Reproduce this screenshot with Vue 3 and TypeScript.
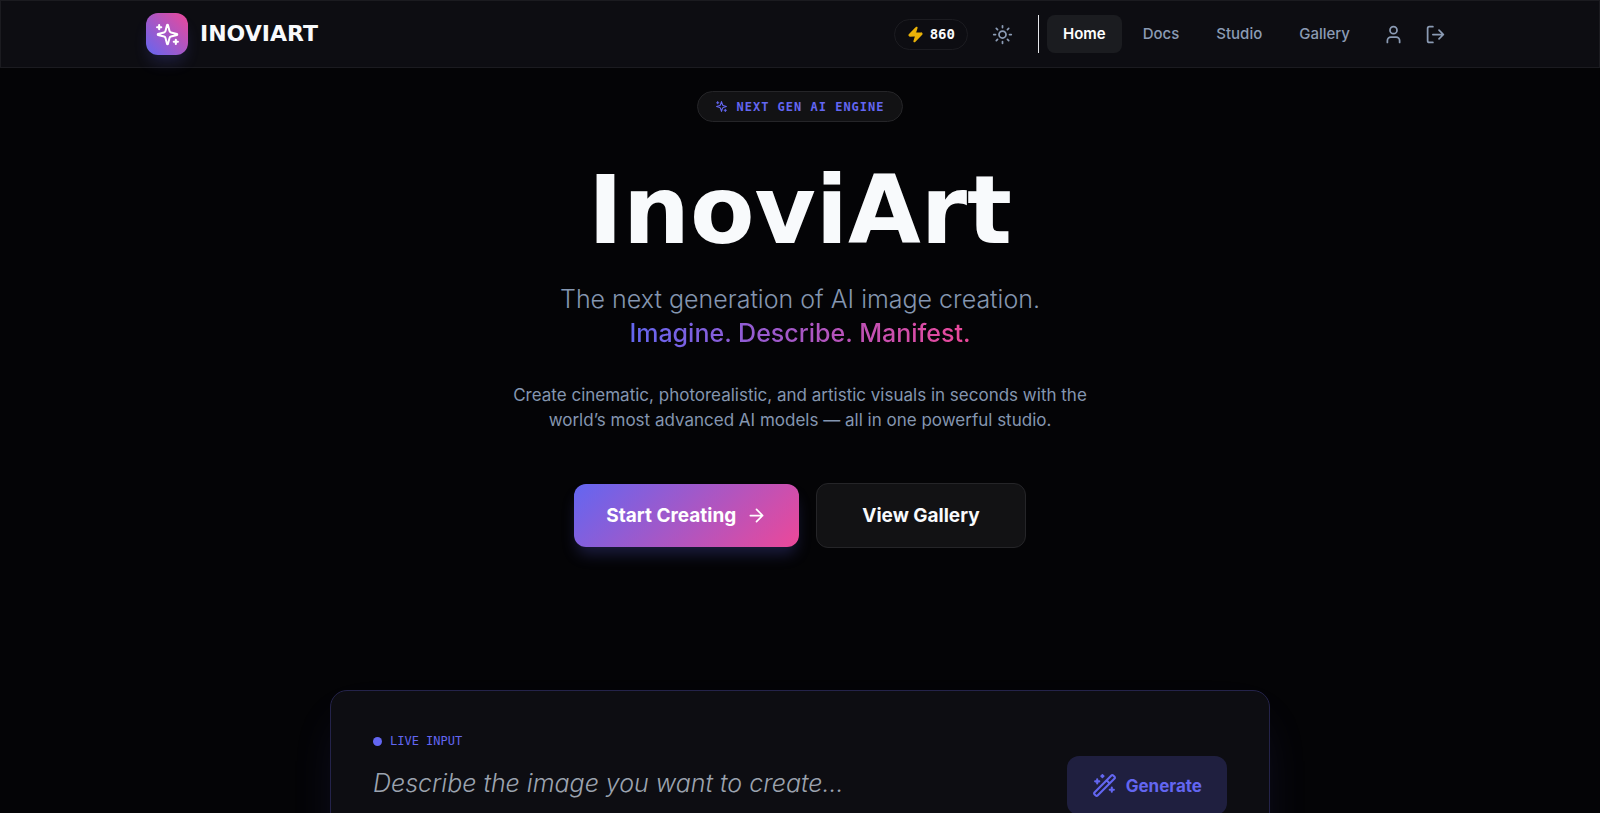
<script setup lang="ts">
import { ref } from 'vue'

interface NavLink {
  label: string
  href: string
  active?: boolean
}

const credits = ref(860)
const prompt = ref('')
const links: NavLink[] = [
  { label: 'Home', href: '#home', active: true },
  { label: 'Docs', href: '#docs' },
  { label: 'Studio', href: '#studio' },
  { label: 'Gallery', href: '#gallery' },
]
</script>

<template>
  <div class="page">
    <header class="topbar">
      <div class="bar">
        <a class="brand" href="#home">
          <span class="brand-mark">
            <svg class="icon" width="25" height="25" viewBox="0 0 24 24" aria-hidden="true">
              <path d="M9.937 15.5A2 2 0 0 0 8.5 14.063l-6.135-1.582a.5.5 0 0 1 0-.962L8.5 9.936A2 2 0 0 0 9.937 8.5l1.582-6.135a.5.5 0 0 1 .963 0L14.063 8.5A2 2 0 0 0 15.5 9.937l6.135 1.581a.5.5 0 0 1 0 .964L15.5 14.063a2 2 0 0 0-1.437 1.437l-1.582 6.135a.5.5 0 0 1-.963 0z" transform="translate(12 12) scale(.94) translate(-12 -12)" />
              <path d="M4 3v4M2 5h4M20 17v4M18 19h4" />
            </svg>
          </span>
          <span class="brand-name">INOVIART</span>
        </a>

        <div class="actions">
          <span class="credits">
            <svg width="17" height="17" viewBox="0 0 24 24" aria-hidden="true">
              <path class="bolt" d="M4 14a1 1 0 0 1-.78-1.63l9.9-10.2a.5.5 0 0 1 .86.46l-1.92 6.02A1 1 0 0 0 13 10h7a1 1 0 0 1 .78 1.63l-9.9 10.2a.5.5 0 0 1-.86-.46l1.92-6.02A1 1 0 0 0 11 14z" />
            </svg>
            {{ credits }}
          </span>
          <button class="icon-button" type="button" aria-label="Switch theme">
            <svg class="icon" width="21" height="21" viewBox="0 0 24 24" aria-hidden="true">
              <circle cx="12" cy="12" r="4" />
              <path d="M12 2v2M12 20v2M4.93 4.93l1.41 1.41M17.66 17.66l1.41 1.41M2 12h2M20 12h2M6.34 17.66l-1.41 1.41M19.07 4.93l-1.41 1.41" />
            </svg>
          </button>
          <nav class="nav">
            <a
              v-for="link in links"
              :key="link.label"
              class="nav-link"
              :class="{ active: link.active }"
              :href="link.href"
            >{{ link.label }}</a>
          </nav>
          <div class="account">
            <button class="icon-button" type="button" aria-label="Profile">
              <svg class="icon" width="21" height="21" viewBox="0 0 24 24" aria-hidden="true">
                <path d="M19 21v-2a4 4 0 0 0-4-4H9a4 4 0 0 0-4 4v2" />
                <circle cx="12" cy="7" r="4" />
              </svg>
            </button>
            <button class="icon-button" type="button" aria-label="Log out">
              <svg class="icon" width="21" height="21" viewBox="0 0 24 24" aria-hidden="true">
                <path d="M9 21H5a2 2 0 0 1-2-2V5a2 2 0 0 1 2-2h4M16 17l5-5-5-5M21 12H9" />
              </svg>
            </button>
          </div>
        </div>
      </div>
    </header>

    <main class="hero">
      <p class="badge">
        <svg class="icon" width="13" height="13" viewBox="0 0 24 24" aria-hidden="true">
          <path d="m12 3-1.912 5.813a2 2 0 0 1-1.275 1.275L3 12l5.813 1.912a2 2 0 0 1 1.275 1.275L12 21l1.912-5.813a2 2 0 0 1 1.275-1.275L21 12l-5.813-1.912a2 2 0 0 1-1.275-1.275L12 3Z" />
          <path d="M5 3v4M3 5h4M19 17v4M17 19h4" />
        </svg>
        NEXT GEN AI ENGINE
      </p>
      <h1 class="title">InoviArt</h1>
      <p class="tagline">
        The next generation of AI image creation.<br>
        <span class="tagline-accent">Imagine. Describe. Manifest.</span>
      </p>
      <p class="summary">
        Create cinematic, photorealistic, and artistic visuals in seconds with the world’s most advanced AI models — all in one powerful studio.
      </p>
      <div class="cta">
        <a class="cta-link primary" href="#studio">
          Start Creating
          <svg class="icon" width="21" height="21" viewBox="0 0 24 24" aria-hidden="true">
            <path d="M5 12h14M12 5l7 7-7 7" />
          </svg>
        </a>
        <a class="cta-link secondary" href="#gallery">View Gallery</a>
      </div>

      <form class="composer" @submit.prevent>
        <div class="field">
          <label class="field-label" for="prompt"><span class="dot"></span>LIVE INPUT</label>
          <input id="prompt" v-model="prompt" class="prompt" type="text" placeholder="Describe the image you want to create...">
        </div>
        <button class="generate" type="submit">
          <svg class="icon" width="25" height="25" viewBox="0 0 24 24" aria-hidden="true">
            <path d="m21.64 3.64-1.28-1.28a1.21 1.21 0 0 0-1.72 0L2.36 18.64a1.21 1.21 0 0 0 0 1.72l1.28 1.28a1.2 1.2 0 0 0 1.72 0L21.64 5.36a1.2 1.2 0 0 0 0-1.72M14 7l3 3M5 6v4M19 14v4M10 2v2M7 8H3M21 16h-4M11 3H9" />
          </svg>
          Generate
        </button>
      </form>
    </main>
  </div>
</template>

<style>
html {
  background: #040406;
  scrollbar-width: none;
}

body {
  margin: 0;
}
</style>

<style scoped>
.page {
  min-height: 100vh;
  background: #040406;
  color: #f8fafc;
  font-family: Inter, "Liberation Sans", sans-serif;
}

.page *,
.page *::before {
  box-sizing: border-box;
}

a {
  color: inherit;
  text-decoration: none;
}

button {
  border: 0;
  font: inherit;
  cursor: pointer;
}

.icon {
  flex: none;
  fill: none;
  stroke: currentColor;
  stroke-width: 2;
  stroke-linecap: round;
  stroke-linejoin: round;
}

.topbar {
  border: 1px solid #1b1b20;
  background: #0d0d12;
}

.bar {
  display: flex;
  align-items: center;
  justify-content: space-between;
  max-width: 1308px;
  height: 66px;
  margin: 0 auto;
}

.brand {
  display: flex;
  align-items: center;
  gap: 12px;
}

.brand-mark {
  display: grid;
  place-items: center;
  width: 42px;
  height: 42px;
  border-radius: 12px;
  background: linear-gradient(45deg, #6366f1, #ec4899);
  box-shadow: 0 10px 15px -3px rgba(99, 102, 241, 0.2);
  color: #fff;
}

.brand-name {
  font: 700 22px/28px "DejaVu Sans", sans-serif;
}

.actions {
  display: flex;
  align-items: center;
}

.credits {
  display: flex;
  align-items: center;
  gap: 6px;
  height: 31px;
  margin-right: 16px;
  padding: 0 12px;
  border: 1px solid #1c1c21;
  border-radius: 16px;
  font: 700 14px/20px "DejaVu Sans Mono", monospace;
}

.bolt {
  fill: #eab308;
  stroke: #eab308;
  stroke-width: 2;
  stroke-linejoin: round;
}

.icon-button {
  display: grid;
  place-items: center;
  width: 38px;
  height: 38px;
  padding: 0;
  border-radius: 8px;
  background: transparent;
  color: #8b9bb4;
}

.nav {
  display: flex;
  gap: 5px;
  margin-left: 16px;
  padding-left: 8px;
  border-left: 1px solid #e5e7eb;
}

.nav-link {
  padding: 8px 16px;
  border-radius: 8px;
  color: #8b9bb4;
  font-size: 15px;
  font-weight: 500;
  line-height: 22px;
}

.nav-link.active {
  background: #1b1c20;
  color: #fff;
  font-weight: 600;
}

.account {
  display: flex;
  gap: 4px;
  margin-left: 8px;
}

.hero {
  display: flex;
  flex-direction: column;
  align-items: center;
  padding: 23px 24px 64px;
}

.badge {
  display: flex;
  align-items: center;
  gap: 8px;
  height: 31px;
  margin: 0;
  padding: 0 17px;
  border: 1px solid #252528;
  border-radius: 16px;
  background: #121214;
  color: #6366f1;
  font: 700 12px/16px "DejaVu Sans Mono", monospace;
  letter-spacing: 1px;
}

.title {
  margin: 39px 0 0;
  font: 700 94px/100px "DejaVu Sans", sans-serif;
}

.tagline {
  margin: 21px 0 0;
  color: #8496b0;
  font-size: 25px;
  font-weight: 300;
  line-height: 34px;
  text-align: center;
}

.tagline-accent {
  background: linear-gradient(90deg, #6366f1, #ec4899);
  background-clip: text;
  -webkit-background-clip: text;
  color: transparent;
  font-weight: 500;
}

.summary {
  max-width: 600px;
  margin: 33px 0 0;
  color: #8496b0;
  font-size: 17px;
  line-height: 25px;
  text-align: center;
}

.cta {
  display: flex;
  align-items: center;
  gap: 17px;
  margin-top: 50px;
}

.cta-link {
  display: flex;
  align-items: center;
  gap: 10px;
  border-radius: 12px;
  font-size: 19px;
  font-weight: 700;
  line-height: 29px;
}

.primary {
  padding: 17px 32px;
  background: linear-gradient(135deg, #6366f1, #ec4899);
  box-shadow: 0 10px 15px -3px rgba(99, 102, 241, 0.25);
  color: #fff;
}

.secondary {
  padding: 17px 45px;
  border: 1px solid #252528;
  background: #121214;
}

.composer {
  display: flex;
  align-items: center;
  gap: 32px;
  width: 100%;
  max-width: 940px;
  margin-top: 142px;
  padding: 42px;
  border: 1px solid #24234a;
  border-radius: 17px;
  background: #0d0d12;
  box-shadow: 0 25px 50px -12px rgba(99, 102, 241, 0.15);
}

.field {
  flex: 1;
  min-width: 0;
  padding-bottom: 30px;
}

.field-label {
  display: flex;
  align-items: center;
  gap: 8px;
  color: #6366f1;
  font: 400 12px/17px "DejaVu Sans Mono", monospace;
}

.dot {
  width: 9px;
  height: 9px;
  border-radius: 50%;
  background: #6366f1;
}

.prompt {
  width: 100%;
  height: 50px;
  margin-top: 8px;
  padding: 0;
  border: 0;
  outline: 0;
  background: transparent;
  color: #f8fafc;
  font: italic 300 25px/34px Inter, "Liberation Sans", sans-serif;
}

.prompt::placeholder {
  color: #9ca3af;
}

.generate {
  display: flex;
  align-items: center;
  gap: 9px;
  padding: 17px 25px;
  border-radius: 12px;
  background: #1f1f3f;
  color: #6366f1;
  font-size: 17px;
  font-weight: 700;
  line-height: 24px;
}
</style>
